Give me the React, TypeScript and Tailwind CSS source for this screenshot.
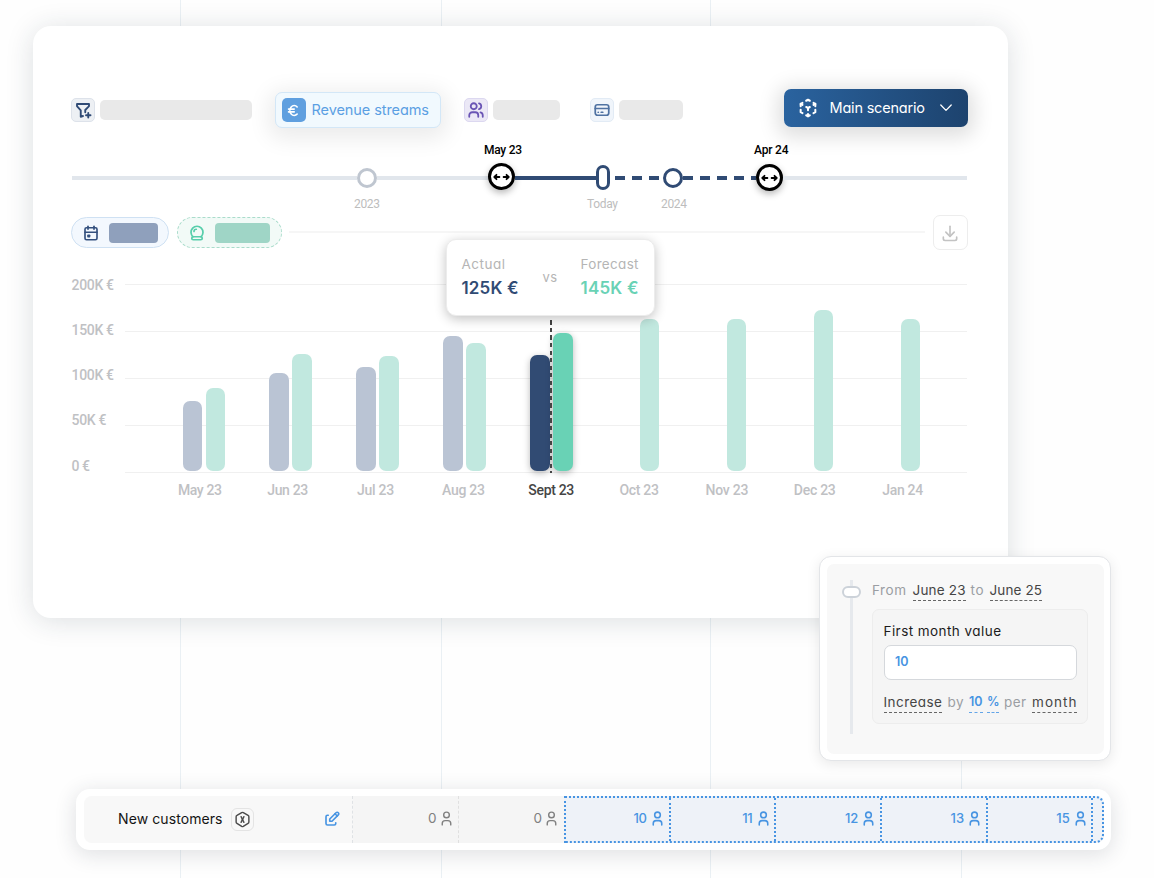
import { useLayoutEffect, useRef, useState, type ReactNode } from "react";
import {
  TbCalendarEvent,
  TbCreditCard,
  TbCrystalBall,
  TbCube3dSphere,
  TbCurrencyEuro,
  TbDownload,
  TbEdit,
  TbFilterPlus,
  TbHexagonLetterX,
  TbUser,
  TbUsers,
} from "react-icons/tb";

/** One line of text whose tracking is set so that it spans `w` pixels. */
function Fit({ w, className = "", children }: { w: number; className?: string; children: string }) {
  const ref = useRef<HTMLSpanElement>(null);
  const [spacing, setSpacing] = useState(0);
  useLayoutEffect(() => {
    const el = ref.current;
    if (!el) return;
    el.style.letterSpacing = "0px";
    const natural = el.getBoundingClientRect().width;
    const next = (w - natural) / Math.max(1, children.length - 1);
    el.style.letterSpacing = `${next}px`;
    setSpacing(next);
  }, [w, children]);
  return (
    <span className={`block shrink-0 whitespace-nowrap ${className}`} style={{ width: w }}>
      <span ref={ref} className="inline-block" style={{ letterSpacing: spacing }}>
        {children}
      </span>
    </span>
  );
}

function Placeholder({ className }: { className: string }) {
  return <div className={`h-[20.5px] shrink-0 rounded-[5px] bg-[#e9e9e9] ${className}`} />;
}

function IconChip({ className, children }: { className: string; children: ReactNode }) {
  return (
    <div className={`flex size-[23.5px] shrink-0 items-center justify-center rounded-[5px] border ${className}`}>
      {children}
    </div>
  );
}

function Toolbar() {
  return (
    <div className="flex h-[38px] items-center">
      <div className="mt-[4px] flex items-center">
        <IconChip className="border-[#dde2ea] bg-[#edf0f4] text-[#2f4a75]">
          <TbFilterPlus className="size-[18px]" strokeWidth={2.5} />
        </IconChip>
        <Placeholder className="ml-[5.5px] w-[152px]" />
        <div className="ml-[23px] flex h-[36.5px] w-[166px] items-center rounded-[7px] border border-[#d3e7f7] bg-[#f1f9fe] pl-[6px] shadow-[0_5px_22px_6px_rgba(0,0,0,0.08)]">
          <div className="flex size-[23.5px] items-center justify-center rounded-[5px] bg-[#5f9fdf] text-white">
            <TbCurrencyEuro className="size-[17px]" strokeWidth={2.3} />
          </div>
          <Fit w={117.5} className="ml-[6px] text-[14.5px] text-[#5b9fe3]">Revenue streams</Fit>
        </div>
        <IconChip className="ml-[23px] border-[#dcd8f0] bg-[#ebe8f6] text-[#6a55b5]">
          <TbUsers className="size-[18px]" strokeWidth={2.4} />
        </IconChip>
        <Placeholder className="ml-[5.5px] w-[66.5px]" />
        <IconChip className="ml-[30.5px] border-[#e2ebf5] bg-[#f0f5fb] text-[#4f72a2]">
          <TbCreditCard className="size-[18px]" strokeWidth={2.3} />
        </IconChip>
        <Placeholder className="ml-[5.5px] w-[63.5px]" />
      </div>
      <div className="ml-auto flex h-[38px] w-[184px] items-center rounded-[7px] bg-linear-to-r from-[#2a639f] to-[#1d436e] pl-[13px] text-white shadow-[0_4px_20px_6px_rgba(0,0,0,0.13)]">
        <TbCube3dSphere className="size-[22px]" strokeWidth={2.2} />
        <Fit w={95.5} className="ml-[10.5px] text-[14.5px]">Main scenario</Fit>
        <svg className="ml-[15px] h-[8px] w-[12px]" viewBox="0 0 12 8" fill="none" stroke="currentColor" strokeWidth="1.3" strokeLinecap="round" strokeLinejoin="round">
          <path d="M.8 1 6 6.4 11.2 1" />
        </svg>
      </div>
    </div>
  );
}

function RangeHandle() {
  return (
    <div className="flex size-[27px] shrink-0 items-center justify-center rounded-full border-[3.6px] border-black bg-white shadow-[0_3px_7px_rgba(0,0,0,0.28)]">
      <svg className="h-[8px] w-[17px] shrink-0" viewBox="0 0 17 8" fill="none" stroke="#000" strokeWidth="1.8" strokeLinecap="round" strokeLinejoin="round">
        <path d="M6.4 4H1.6M3.5 1.8 1.3 4l2.2 2.2M10.6 4h4.8M13.5 1.8 15.7 4l-2.2 2.2" />
      </svg>
    </div>
  );
}

function Timeline() {
  return (
    <div className="font-[Roboto,sans-serif]">
      <div className="mt-[14px] flex h-[17px] items-center text-[12px] font-medium text-black">
        <Fit w={38} className="ml-[413px]">May 23</Fit>
        <Fit w={34.5} className="ml-[232px]">Apr 24</Fit>
      </div>
      <div className="mt-[6px] flex h-[27px] items-center">
        <div className="ml-px h-[4px] w-[285px] bg-[#e1e6ec]" />
        <div className="size-[20px] rounded-full border-[3px] border-[#bfc6d0] bg-white" />
        <div className="h-[4px] w-[111px] bg-[#e1e6ec]" />
        <div className="-mt-[2px] h-[27px] w-[27px]">
          <RangeHandle />
        </div>
        <div className="h-[4px] w-[80.5px] bg-[#304b74]" />
        <div className="h-[25px] w-[14px] rounded-[7px] border-[3px] border-[#304b74] bg-white" />
        <div className="h-[4px] w-[53.5px] bg-[repeating-linear-gradient(90deg,transparent_0_5px,#304b74_5px_15px,transparent_15px_17px)]" />
        <div className="size-[20px] rounded-full border-[3px] border-[#304b74] bg-white" />
        <div className="h-[4px] w-[72.5px] bg-[repeating-linear-gradient(90deg,#304b74_0_10px,transparent_10px_17px)]" />
        <RangeHandle />
        <div className="h-[4px] flex-1 bg-[#e1e6ec]" />
        <div className="w-px" />
      </div>
      <div className="mt-[4px] flex h-[17px] items-center text-[12px] text-[#bdbdbd]">
        <Fit w={26} className="ml-[283px]">2023</Fit>
        <Fit w={31} className="ml-[207px]">Today</Fit>
        <Fit w={26} className="ml-[43px]">2024</Fit>
      </div>
    </div>
  );
}

function SeriesRow() {
  return (
    <div className="mt-[3px] flex h-[35px] items-center">
      <div className="flex h-[31px] w-[98px] items-center rounded-full border border-[#cfe1f3] bg-[#f3f8fe] pl-[10px]">
        <TbCalendarEvent className="size-[18px] text-[#34507e]" strokeWidth={2.2} />
        <div className="ml-[9px] h-[20px] w-[49px] rounded-[4px] bg-[#8fa0bc]" />
      </div>
      <div className="ml-[8px] flex h-[31px] w-[104.5px] items-center rounded-full border border-dashed border-[#a9dccb] bg-[#f2faf7] pl-[10px]">
        <TbCrystalBall className="size-[18px] text-[#57ceab]" strokeWidth={2.3} />
        <div className="ml-[9px] h-[20px] w-[55px] rounded-[4px] bg-[#9fd5c6]" />
      </div>
      <div className="-mt-[2px] ml-[7px] h-[2px] w-[636px] bg-[#f6f6f6]" />
      <div className="mr-[0.5px] ml-auto flex size-[35px] items-center justify-center rounded-[7px] border border-[#ededed] text-[#c3c3c3]">
        <TbDownload className="size-[20px]" />
      </div>
    </div>
  );
}

type Month = { label: string; w: number; actual?: number; forecast: number; current?: boolean };

const months: Month[] = [
  { label: "May 23", w: 44, actual: 70, forecast: 83.5 },
  { label: "Jun 23", w: 41, actual: 98, forecast: 117.5 },
  { label: "Jul 23", w: 37, actual: 104, forecast: 115.5 },
  { label: "Aug 23", w: 43, actual: 135.5, forecast: 128 },
  { label: "Sept 23", w: 46, actual: 116.5, forecast: 138.5, current: true },
  { label: "Oct 23", w: 39.5, forecast: 152 },
  { label: "Nov 23", w: 43, forecast: 152 },
  { label: "Dec 23", w: 42, forecast: 161.5 },
  { label: "Jan 24", w: 41, forecast: 152 },
];

const scale = [
  { label: "200K €", w: 42.5 },
  { label: "150K €", w: 42.5 },
  { label: "100K €", w: 42.5 },
  { label: "50K €", w: 35 },
  { label: "0 €", w: 18.5 },
];

function Bar({ height, color }: { height: number; color: string }) {
  return <div className={`w-[19.5px] rounded-[7px] ${color}`} style={{ height }} />;
}

function Chart() {
  return (
    <div className="relative mt-[12px] font-[Roboto,sans-serif] text-[14px] font-medium text-[#bfc1c4]">
      <div className="grid h-[211px] grid-cols-[54px_1fr] grid-rows-[211px]">
        <div>
          {scale.map((s) => (
            <div key={s.label} className="flex h-[45.25px] items-center">
              <Fit w={s.w} className="ml-[0.5px] leading-[20px]">{s.label}</Fit>
            </div>
          ))}
        </div>
        <div className="grid grid-rows-[189px] pt-[22px]">
          <div className="flex flex-col justify-between [grid-area:1/1]">
            {scale.map((s) => (
              <div key={s.label} className="mr-px h-px bg-[#f0f0f0]" />
            ))}
          </div>
          <div className="z-10 flex items-end gap-[44.4px] pb-[2px] pl-[57.5px] [grid-area:1/1]">
            {months.map((m) => (
              <div key={m.label} className="flex w-[42.5px] shrink-0 items-end justify-end gap-[3.5px]">
                {m.actual !== undefined && (
                  <Bar
                    height={m.actual}
                    color={m.current ? "bg-[#314b73] shadow-[0_2px_7px_rgba(0,0,0,0.28)]" : "bg-[#bac4d4]"}
                  />
                )}
                <Bar
                  height={m.forecast}
                  color={m.current ? "bg-[#69d2b5] shadow-[0_2px_7px_rgba(0,0,0,0.28)]" : "bg-[#c1e8df]"}
                />
              </div>
            ))}
          </div>
        </div>
      </div>
      <div className="mt-[8px] ml-[85px] flex h-[18px] items-center">
        {months.map((m) => (
          <div key={m.label} className="flex w-[87.85px] shrink-0 justify-center">
            <Fit w={m.w} className={m.current ? "leading-[18px] text-[#454545]" : "leading-[18px]"}>{m.label}</Fit>
          </div>
        ))}
      </div>
      <div className="absolute top-[55px] left-[479px] z-20 h-[156px] w-[2px] bg-[repeating-linear-gradient(180deg,transparent_0_3.3px,#444_3.3px_7.55px)]" />
      <ComparisonTooltip />
    </div>
  );
}

function ComparisonTooltip() {
  return (
    <div className="absolute -top-[23px] left-[375px] z-20 flex h-[77px] w-[209px] rounded-[10px] border border-[#ececec] bg-white pt-[14px] pl-[14.5px] font-[Inter,sans-serif] font-normal shadow-[0_3px_12px_rgba(0,0,0,0.24)]">
      <div>
        <Fit w={43.5} className="text-[13.5px] leading-[20px] text-[#b5b5b5]">Actual</Fit>
        <Fit w={57} className="mt-[2px] text-[17px] leading-[24px] font-semibold text-[#304b74]">125K €</Fit>
      </div>
      <Fit w={14.5} className="mt-[13px] ml-[24px] text-[13px] leading-[20px] text-[#b5b5b5]">vs</Fit>
      <div className="ml-[23.5px]">
        <Fit w={58} className="text-[13.5px] leading-[20px] text-[#b5b5b5]">Forecast</Fit>
        <Fit w={58} className="mt-[2px] text-[17px] leading-[24px] font-semibold text-[#69d2b5]">145K €</Fit>
      </div>
    </div>
  );
}

function GrowthPanel() {
  return (
    <div className="absolute top-[556px] left-[819px] z-30 h-[205px] w-[292px] rounded-[12px] border border-[#e3e5e8] bg-white p-[6.5px] shadow-[0_3px_14px_rgba(0,0,0,0.09)]">
      <div className="flex h-full rounded-[7px] bg-[#f8f8f8] pt-[16px]">
        <div className="ml-[15.5px] flex w-[19px] flex-col items-center">
          <div className="h-[6px] w-[3px] bg-[#e6e9ed]" />
          <div className="h-[12px] w-[19px] rounded-full border-2 border-[#ccd2d9] bg-white" />
          <div className="h-[136px] w-[3px] bg-[#e6e9ed]" />
        </div>
        <div className="ml-[11px]">
          <div className="flex h-[21px] text-[13.5px] leading-[20px] text-[#9b9ea3]">
            <Fit w={34}>From</Fit>
            <Fit w={53} className="ml-[6.5px] border-b border-dashed border-[#666] text-[#454545]">June 23</Fit>
            <Fit w={13} className="ml-[5px]">to</Fit>
            <Fit w={52.5} className="ml-[6px] border-b border-dashed border-[#666] text-[#454545]">June 25</Fit>
          </div>
          <div className="mt-[8px] h-[115px] w-[216px] rounded-[7px] border border-[#ededed] bg-[#f5f5f5] px-[10.5px] pt-[11px]">
            <Fit w={117.5} className="text-[13.5px] leading-[20px] text-[#1c1c1c]">First month value</Fit>
            <div className="mt-[4px] flex h-[35px] w-[193.5px] items-center rounded-[7px] border border-[#d5d8dc] bg-white pl-[10.5px]">
              <Fit w={13.5} className="mt-px text-[12.5px] font-semibold text-[#4794e2]">10</Fit>
            </div>
            <div className="mt-[12px] flex h-[21px] text-[13.5px] leading-[20px] text-[#9b9ea3]">
              <Fit w={58.5} className="border-b border-dashed border-[#666] text-[#454545]">Increase</Fit>
              <Fit w={16} className="ml-[5.5px]">by</Fit>
              <Fit w={13.5} className="ml-[5.5px] border-b border-dashed border-[#63a5e8] text-[12.5px] font-semibold text-[#4794e2]">10</Fit>
              <Fit w={11.5} className="ml-[4.5px] border-b border-dashed border-[#63a5e8] text-[12.5px] font-semibold text-[#4794e2]">%</Fit>
              <Fit w={22} className="ml-[5.5px]">per</Fit>
              <Fit w={44.5} className="ml-[6px] border-b border-dashed border-[#666] text-[#454545]">month</Fit>
            </div>
          </div>
        </div>
      </div>
    </div>
  );
}

const forecastCells = [
  { value: "10", w: 13.5 },
  { value: "11", w: 10.5 },
  { value: "12", w: 13.5 },
  { value: "13", w: 13.5 },
  { value: "15", w: 13.5 },
];

function CustomersRow() {
  return (
    <div className="mt-[171px] ml-[76px] flex h-[61px] w-[1035px] rounded-[14px] bg-white py-[7px] pl-[8px] shadow-[0_4px_20px_2px_rgba(40,50,60,0.13)]">
      <div className="flex w-[269px] items-center rounded-l-[8px] border-r border-dashed border-[#dfe2e5] bg-[#f8f8f8] pl-[34px]">
        <Fit w={104.5} className="-mt-[2px] text-[14px] text-[#141414]">New customers</Fit>
        <div className="ml-[8.5px] flex size-[23px] items-center justify-center rounded-[6px] border border-[#e4e4e4] text-[#4b4b4b]">
          <TbHexagonLetterX className="size-[17px]" />
        </div>
        <TbEdit className="-mt-px ml-[68.5px] size-[18px] text-[#4794e2]" strokeWidth={2.2} />
      </div>
      {[0, 1].map((i) => (
        <div
          key={i}
          className={`flex w-[105.5px] items-center justify-end bg-[#f5f5f5] pb-[2px] text-[13.5px] text-[#808080] ${i === 0 ? "border-r border-dashed border-[#e0e0e0] pr-[3px]" : "pr-[4px]"}`}
        >
          <Fit w={8}>0</Fit>
          <TbUser className="ml-[1.5px] size-[17px]" />
        </div>
      ))}
      <div className="flex rounded-r-[8px] border-2 border-dotted border-[#4794e2] bg-[#eef2f8] text-[13px] text-[#4794e2]">
        {forecastCells.map((c, i) => (
          <div
            key={c.value}
            className={`flex items-center justify-end border-r-2 border-dotted border-[#4794e2] pb-[2px] font-medium ${i === 0 ? "w-[104.5px] pr-[2.5px]" : "w-[105.7px] pr-[2.5px]"}`}
          >
            <Fit w={c.w}>{c.value}</Fit>
            <TbUser className="ml-[2px] size-[17px]" strokeWidth={2.2} />
          </div>
        ))}
        <div className="w-[8.7px]" />
      </div>
    </div>
  );
}

export default function App() {
  return (
    <div className="relative h-[878px] w-[1154px] overflow-hidden bg-[#fefefe] font-[Inter,sans-serif] [font-feature-settings:'cv11']">
      <div className="absolute inset-y-0 left-[180px] w-px bg-[#eaf0f4]" />
      <div className="absolute inset-y-0 left-[440.5px] w-px bg-[#eaf0f4]" />
      <div className="absolute inset-y-0 left-[710px] w-px bg-[#eaf0f4]" />
      <div className="absolute top-[700px] bottom-0 left-[960.5px] w-px bg-[#eaf0f4]" />
      <div className="relative flex flex-col pt-[26px]">
        <div className="ml-[33px] h-[592px] w-[975px] rounded-[18px] bg-white px-[38px] pt-[63px] pr-[40px] shadow-[0_3px_28px_rgba(30,50,60,0.15)]">
          <Toolbar />
          <Timeline />
          <SeriesRow />
          <Chart />
        </div>
        <CustomersRow />
      </div>
      <GrowthPanel />
    </div>
  );
}
